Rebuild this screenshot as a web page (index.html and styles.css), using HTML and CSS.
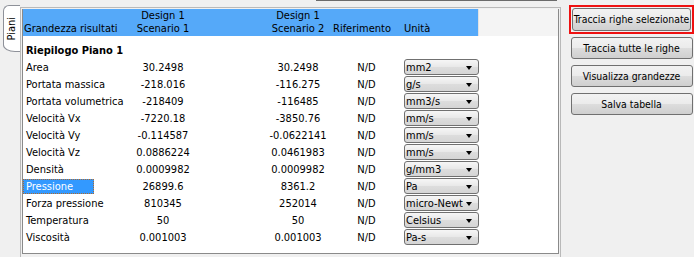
FILE: index.html
```html
<!DOCTYPE html>
<html lang="it">
<head>
    <meta charset="UTF-8">
    <title>Risultati piani</title>
    <link rel="stylesheet" href="styles.css">
</head>
<body>
    <div class="screen">
        <div class="topedge"></div>
        <div class="main">
            <div class="tabs">
                <div class="tab"><span>Piani</span></div>
            </div>
            <div class="panel">
                <div class="inner">
                    <div class="head">
                        <div class="cols head-cols">
                            <div class="h-name">Grandezza risultati</div>
                            <div class="c1">Design 1<br>Scenario 1</div>
                            <div class="c2">Design 1<br>Scenario 2</div>
                            <div class="rif">Riferimento</div>
                            <div class="unit">Unità</div>
                        </div>
                        <div class="head-rest"></div>
                    </div>
                    <div class="rows">
                        <div class="cols row">
                            <div class="name"><span class="group">Riepilogo Piano 1</span></div>
                        </div>
                        <div class="cols row">
                            <div class="name"><span>Area</span></div>
                            <div class="c1">30.2498</div>
                            <div class="c2">30.2498</div>
                            <div class="rif">N/D</div>
                            <div class="unit"><div class="combo"><span>mm2</span></div></div>
                        </div>
                        <div class="cols row">
                            <div class="name"><span>Portata massica</span></div>
                            <div class="c1">-218.016</div>
                            <div class="c2">-116.275</div>
                            <div class="rif">N/D</div>
                            <div class="unit"><div class="combo"><span>g/s</span></div></div>
                        </div>
                        <div class="cols row">
                            <div class="name"><span>Portata volumetrica</span></div>
                            <div class="c1">-218409</div>
                            <div class="c2">-116485</div>
                            <div class="rif">N/D</div>
                            <div class="unit"><div class="combo"><span>mm3/s</span></div></div>
                        </div>
                        <div class="cols row">
                            <div class="name"><span>Velocità Vx</span></div>
                            <div class="c1">-7220.18</div>
                            <div class="c2">-3850.76</div>
                            <div class="rif">N/D</div>
                            <div class="unit"><div class="combo"><span>mm/s</span></div></div>
                        </div>
                        <div class="cols row">
                            <div class="name"><span>Velocità Vy</span></div>
                            <div class="c1">-0.114587</div>
                            <div class="c2">-0.0622141</div>
                            <div class="rif">N/D</div>
                            <div class="unit"><div class="combo"><span>mm/s</span></div></div>
                        </div>
                        <div class="cols row">
                            <div class="name"><span>Velocità Vz</span></div>
                            <div class="c1">0.0886224</div>
                            <div class="c2">0.0461983</div>
                            <div class="rif">N/D</div>
                            <div class="unit"><div class="combo"><span>mm/s</span></div></div>
                        </div>
                        <div class="cols row">
                            <div class="name"><span>Densità</span></div>
                            <div class="c1">0.0009982</div>
                            <div class="c2">0.0009982</div>
                            <div class="rif">N/D</div>
                            <div class="unit"><div class="combo"><span>g/mm3</span></div></div>
                        </div>
                        <div class="cols row">
                            <div class="name"><span class="selected">Pressione</span></div>
                            <div class="c1">26899.6</div>
                            <div class="c2">8361.2</div>
                            <div class="rif">N/D</div>
                            <div class="unit"><div class="combo"><span>Pa</span></div></div>
                        </div>
                        <div class="cols row">
                            <div class="name"><span>Forza pressione</span></div>
                            <div class="c1">810345</div>
                            <div class="c2">252014</div>
                            <div class="rif">N/D</div>
                            <div class="unit"><div class="combo"><span>micro-Newton</span></div></div>
                        </div>
                        <div class="cols row">
                            <div class="name"><span>Temperatura</span></div>
                            <div class="c1">50</div>
                            <div class="c2">50</div>
                            <div class="rif">N/D</div>
                            <div class="unit"><div class="combo"><span>Celsius</span></div></div>
                        </div>
                        <div class="cols row">
                            <div class="name"><span>Viscosità</span></div>
                            <div class="c1">0.001003</div>
                            <div class="c2">0.001003</div>
                            <div class="rif">N/D</div>
                            <div class="unit"><div class="combo"><span>Pa-s</span></div></div>
                        </div>
                    </div>
                </div>
            </div>
            <div class="actions">
                <div class="focus-box">
                    <div class="button first">Traccia righe selezionate</div>
                </div>
                <div class="button">Traccia tutte le righe</div>
                <div class="button">Visualizza grandezze</div>
                <div class="button">Salva tabella</div>
            </div>
        </div>
    </div>
</body>
</html>
```

FILE: styles.css
```css
body {
    margin: 0;
    background-color: #f0f0f0;
    font-family: "DejaVu Sans Condensed", "DejaVu Sans", sans-serif;
    font-size: 11px;
    color: #000;
}
.screen {
    width: 694px;
    height: 257px;
    overflow: hidden;
}
.topedge {
    height: 1px;
    width: 241px;
    margin-left: 316px;
    background-color: #6b6b6b;
}
.main {
    display: flex;
    align-items: flex-start;
}
.tabs {
    width: 20px;
    padding-top: 4px;
}
.tab {
    width: 16px;
    height: 45px;
    margin-left: 3px;
    border: 1px solid #8e9199;
    border-right: none;
    border-radius: 6px 0 0 12px / 6px 0 0 7px;
    background-color: #fff;
    display: flex;
    align-items: center;
    justify-content: center;
}
.tab span {
    writing-mode: vertical-rl;
    transform: rotate(180deg);
    line-height: 12px;
}
.panel {
    width: 538px;
    height: 262px;
    margin-top: 6px;
    border: 1px solid #b9b9b9;
    padding: 1px 1px 0 1px;
}
.inner {
    height: 244px;
    border: 1px solid #8a8a8a;
    border-top: none;
    background-color: #fff;
}
.head {
    display: flex;
    height: 27px;
}
.head-cols {
    background-color: #55a9f9;
    align-items: end;
    line-height: 13px;
    padding-bottom: 1px;
}
.head-rest {
    flex: 1;
    background-color: #f4f4f4;
    border-left: 1px solid #e2e2e2;
}
.cols {
    display: grid;
    grid-template-columns: 105px 135px 70px 67px 78px;
    width: 455px;
}
.h-name {
    padding-left: 1px;
    white-space: nowrap;
}
.c1 {
    padding-right: 65px;
    text-align: center;
    white-space: nowrap;
}
.c2 {
    text-align: center;
    white-space: nowrap;
}
.rif {
    text-align: center;
}
.head-cols .rif {
    text-align: left;
}
.unit {
    padding-left: 4px;
}
.rows {
    padding-top: 6px;
}
.row {
    height: 17px;
    line-height: 17px;
}
.name {
    white-space: nowrap;
}
.name span {
    display: inline-block;
    padding-left: 3px;
}
.name .group {
    font-weight: bold;
}
.name .selected {
    width: 71px;
    line-height: 15px;
    box-sizing: border-box;
    background-color: #3399ff;
    color: #fff;
    outline: 1px dotted #b06a2c;
    outline-offset: -1px;
}
.combo {
    position: relative;
    width: 75px;
    height: 16px;
    box-sizing: border-box;
    border: 1px solid #707070;
    border-radius: 3px;
    background: linear-gradient(#f6f6f6, #e8e8e8 50%, #dddddd 51%, #d5d5d5);
    line-height: 15px;
    padding-left: 1px;
}
.combo span {
    display: block;
    width: 57px;
    overflow: hidden;
    white-space: nowrap;
}
.combo::after {
    content: "";
    position: absolute;
    right: 6px;
    top: 6px;
    border-left: 3.5px solid transparent;
    border-right: 3.5px solid transparent;
    border-top: 4px solid #000;
}
.actions {
    padding-left: 8px;
    padding-top: 4px;
    display: flex;
    flex-direction: column;
    align-items: center;
    width: 125px;
    font-size: 10.4px;
}
.focus-box {
    border: 2px solid #ee1111;
    padding: 1px;
}
.button {
    width: 122px;
    height: 22px;
    box-sizing: border-box;
    border: 1px solid #707070;
    border-radius: 3px;
    background: linear-gradient(#f2f2f2, #ebebeb 50%, #dddddd 51%, #cfcfcf);
    line-height: 20px;
    text-align: center;
    white-space: nowrap;
    margin-top: 6px;
}
.focus-box + .button {
    margin-top: 3px;
}
.button.first {
    width: 119px;
    height: 23px;
    margin-top: 0;
    line-height: 21px;
}
```
